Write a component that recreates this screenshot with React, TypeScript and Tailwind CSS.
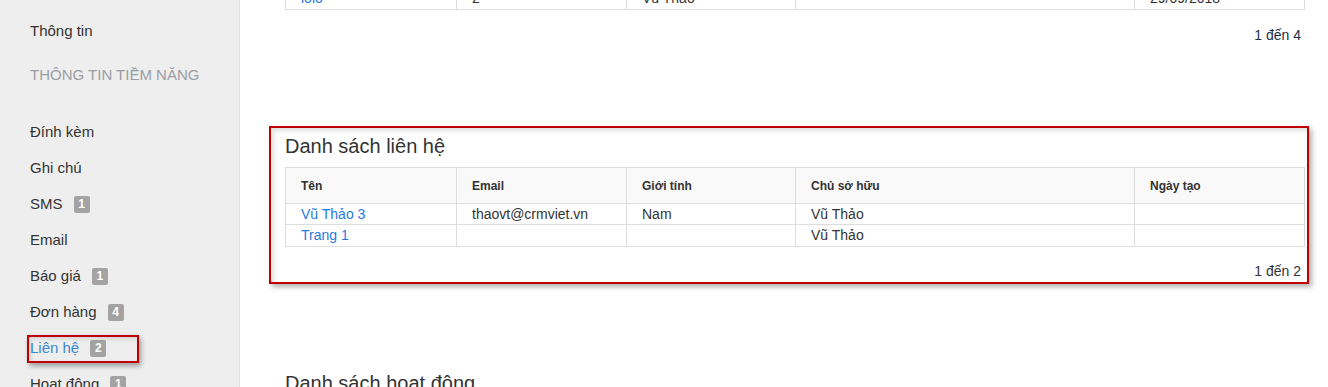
import React from "react";

const Badge = ({ n }: { n: string }) => (
  <span className="ml-[11px] inline-flex h-[17px] w-[16px] items-center justify-center rounded-[2px] bg-[#a3a3a3] text-[12px] font-bold leading-none text-white">
    {n}
  </span>
);

const items: { label: string; badge?: string; active?: boolean }[] = [
  { label: "Đính kèm" },
  { label: "Ghi chú" },
  { label: "SMS", badge: "1" },
  { label: "Email" },
  { label: "Báo giá", badge: "1" },
  { label: "Đơn hàng", badge: "4" },
  { label: "Liên hệ", badge: "2", active: true },
  { label: "Hoạt động", badge: "1" },
];

const cols = "grid grid-cols-[171px_170px_169px_339px_1fr]";

export default function App() {
  return (
    <div
      className="flex h-[387px] w-[1328px] overflow-hidden bg-white text-[#333]"
      style={{ fontFamily: '"Liberation Sans", Arial, sans-serif' }}
    >
      <aside className="w-[240px] shrink-0 border-r border-[#e2e2e2] bg-[#eeeeee] pl-[30px] pt-[13px] text-[15px]">
        <div className="flex h-[36px] items-center text-[#333]">Thông tin</div>
        <div className="mt-[8px] flex h-[36px] items-center uppercase text-[#9a9ea4]">
          THÔNG TIN TIỀM NĂNG
        </div>
        <ul className="mt-[21px]">
          {items.map((it) => (
            <li key={it.label} className="relative flex h-[36px] items-center">
              <span className={it.active ? "text-[#3c89cf]" : "text-[#333]"}>{it.label}</span>
              {it.badge && <Badge n={it.badge} />}
              {it.active && (
                <div className="pointer-events-none absolute left-[-3px] top-[5px] h-[28px] w-[112px] border-2 border-[#c00000] shadow-[2px_3px_5px_rgba(0,0,0,0.35),inset_2px_2px_4px_rgba(0,0,0,0.12)]" />
              )}
            </li>
          ))}
        </ul>
      </aside>

      <main className="flex-1 pl-[45px] pr-[23px] text-[14px]">
        {/* previous table, partially scrolled out */}
        <div className={`${cols} mt-[-12px] border-l border-[#dddddd]`}>
          {["lolo", "2", "Vũ Thảo", "", "29/09/2018"].map((t, i) => (
            <div
              key={i}
              className={`flex h-[22px] items-center border-b border-r border-[#dddddd] px-[15px] ${
                i === 0 ? "text-[#1f7ae0]" : "text-[#333]"
              }`}
            >
              {t}
            </div>
          ))}
        </div>
        <div className="mt-[15px] pr-[4px] text-right leading-[20px] text-[#1d2f45]">1 đến 4</div>

        {/* contact list section */}
        <section className="relative mt-[81px] pb-[3px] pt-[8px]">
          <h2 className="mb-[9px] h-[24px] text-[20px] font-normal leading-[24px] text-[#333]">
            Danh sách liên hệ
          </h2>
          <div className="border-l border-t border-[#dddddd]">
            <div className={`${cols} bg-[#f9f9f9]`}>
              {["Tên", "Email", "Giới tính", "Chủ sở hữu", "Ngày tạo"].map((h) => (
                <div
                  key={h}
                  className="flex h-[36px] items-center border-b border-r border-[#dddddd] px-[15px] text-[12px] font-bold text-[#333]"
                >
                  {h}
                </div>
              ))}
            </div>
            {[
              { h: "h-[21px]", cells: ["Vũ Thảo 3", "thaovt@crmviet.vn", "Nam", "Vũ Thảo", ""] },
              { h: "h-[22px]", cells: ["Trang 1", "", "", "Vũ Thảo", ""] },
            ].map((row, ri) => (
              <div key={ri} className={`${cols} bg-white`}>
                {row.cells.map((c, i) => (
                  <div
                    key={i}
                    className={`flex ${row.h} items-center border-b border-r border-[#dddddd] px-[15px] ${
                      i === 0 ? "text-[#1f7ae0]" : "text-[#333]"
                    }`}
                  >
                    {c}
                  </div>
                ))}
              </div>
            ))}
          </div>
          <div className="mt-[14px] pr-[4px] text-right leading-[20px] text-[#333]">1 đến 2</div>
          <div className="pointer-events-none absolute bottom-0 left-[-16px] right-[-4px] top-0 border-2 border-[#c00000] shadow-[3px_3px_5px_rgba(0,0,0,0.3),inset_3px_3px_5px_rgba(0,0,0,0.12)]" />
        </section>

        <h2 className="mt-[87px] h-[24px] text-[20px] font-normal leading-[24px] text-[#333]">
          Danh sách hoạt động
        </h2>
      </main>
    </div>
  );
}
